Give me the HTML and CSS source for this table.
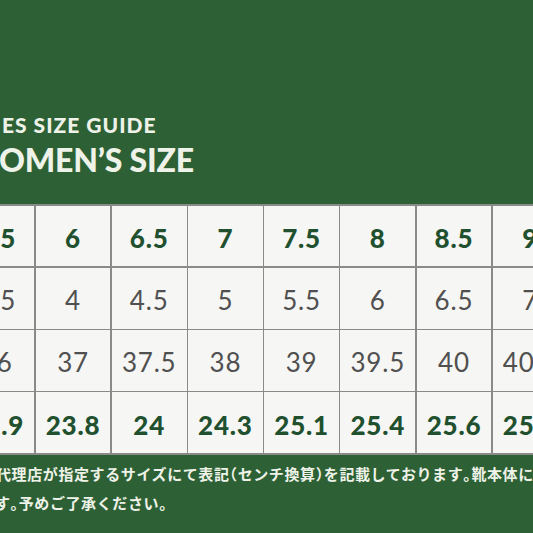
FILE: index.html
```html
<!DOCTYPE html>
<html lang="ja">
<head>
<meta charset="utf-8">
<title>Shoes Size Guide</title>
<link rel="stylesheet" href="styles.css">
</head>
<body>
<div class="page">
  <header class="heads">
    <div class="guide">ES SIZE GUIDE</div>
    <div class="title">OMEN’S SIZE</div>
  </header>
  <div class="table">
    <div class="cell us">5.5</div><div class="cell us">6</div><div class="cell us">6.5</div><div class="cell us">7</div><div class="cell us">7.5</div><div class="cell us">8</div><div class="cell us">8.5</div><div class="cell us">9</div>
    <div class="cell">3.5</div><div class="cell">4</div><div class="cell">4.5</div><div class="cell">5</div><div class="cell">5.5</div><div class="cell">6</div><div class="cell">6.5</div><div class="cell">7</div>
    <div class="cell">36</div><div class="cell">37</div><div class="cell">37.5</div><div class="cell">38</div><div class="cell">39</div><div class="cell">39.5</div><div class="cell">40</div><div class="cell">40.5</div>
    <div class="cell cm">22.9</div><div class="cell cm">23.8</div><div class="cell cm">24</div><div class="cell cm">24.3</div><div class="cell cm">25.1</div><div class="cell cm">25.4</div><div class="cell cm">25.6</div><div class="cell cm">25.9</div>
  </div>
  <div class="note">
    <div class="line l1">代理店が指定するサイズにて表記<span class="p">（</span>センチ換算<span class="p">）</span>を記載しております<span class="p">。</span>靴本体に表記されているサイズと</div>
    <div class="line l2">す<span class="p">。</span>予めご了承ください<span class="p">。</span></div>
  </div>
</div>
</body>
</html>
```

FILE: styles.css
```css
html, body {
  margin: 0;
  padding: 0;
}
body {
  background: #2d6135;
  overflow: hidden;
  width: 533px;
  height: 533px;
}
.page {
  width: 533px;
  height: 533px;
  overflow: hidden;
  padding-top: 113px;
  box-sizing: border-box;
}
.heads {
  color: #eef2e8;
  font-family: Lato, "Open Sans", sans-serif;
  font-weight: 900;
  white-space: nowrap;
}
.guide {
  font-size: 21px;
  line-height: 24px;
  margin-left: 2px;
  letter-spacing: 1px;
}
.title {
  font-size: 32px;
  line-height: 36px;
  margin-top: 5px;
  margin-left: -1px;
  letter-spacing: -0.2px;
}
.table {
  display: grid;
  grid-template-columns: repeat(8, 74.7px);
  grid-auto-rows: 60.75px;
  gap: 1.5px;
  padding: 1.5px;
  background: #8a8a88;
  width: max-content;
  margin-left: -42px;
  margin-top: 26px;
}
.cell {
  background: #f6f6f4;
  display: flex;
  align-items: center;
  justify-content: center;
  padding-top: 4px;
  box-sizing: border-box;
  font-family: Lato, "Open Sans", sans-serif;
  font-size: 26px;
  letter-spacing: 0.8px;
  color: #505050;
}
.us, .cm {
  font-weight: 900;
  color: #21502f;
}
.note {
  margin-top: 4px;
  color: #eef2e8;
  font-family: "Noto Sans CJK JP", sans-serif;
  font-weight: 700;
  font-size: 15px;
  line-height: 29px;
  white-space: nowrap;
  letter-spacing: 0.6px;
}
.p {
  font-feature-settings: "halt" 1;
}
.l1 {
  margin-left: -4px;
}
.l2 {
  margin-left: -5px;
}
```
